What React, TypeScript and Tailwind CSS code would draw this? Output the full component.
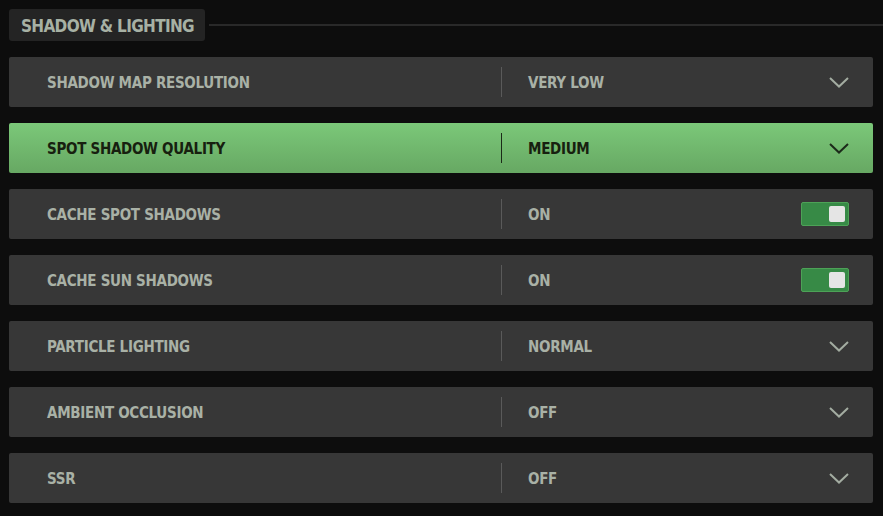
import React from "react";

type Row = { label: string; value: string; kind: "select" | "toggle"; active?: boolean };

const rows: Row[] = [
  { label: "SHADOW MAP RESOLUTION", value: "VERY LOW", kind: "select" },
  { label: "SPOT SHADOW QUALITY", value: "MEDIUM", kind: "select", active: true },
  { label: "CACHE SPOT SHADOWS", value: "ON", kind: "toggle" },
  { label: "CACHE SUN SHADOWS", value: "ON", kind: "toggle" },
  { label: "PARTICLE LIGHTING", value: "NORMAL", kind: "select" },
  { label: "AMBIENT OCCLUSION", value: "OFF", kind: "select" },
  { label: "SSR", value: "OFF", kind: "select" },
];

function Chevron({ dark }: { dark?: boolean }) {
  return (
    <svg width="20" height="11" viewBox="0 0 20 11" fill="none" className="shrink-0">
      <path
        d="M1 1 L10 9.5 L19 1"
        stroke={dark ? "#1c2a1a" : "#a3aca1"}
        strokeWidth="2"
        strokeLinejoin="miter"
      />
    </svg>
  );
}

function Toggle() {
  return (
    <div className="w-[48px] h-[24px] rounded-[2px] bg-[#378a46] border border-[#4da257] flex items-center justify-end pr-[3px]">
      <div className="w-[16px] h-[16px] rounded-[2px] bg-[#e5e5e5]" />
    </div>
  );
}

export default function App() {
  return (
    <div
      className="w-[883px] h-[516px] overflow-hidden bg-[#0d0d0d] pt-[9px] pl-[9px]"
      style={{ fontFamily: '"DejaVu Sans Condensed", "DejaVu Sans", sans-serif' }}
    >
      <div className="flex items-center">
        <div className="h-[32px] w-[196px] shrink-0 rounded-[3px] bg-[#242424] flex items-center pl-[12px] pt-[2px]">
          <span className="whitespace-nowrap text-[17px] font-bold text-[#a7b1a4] tracking-[-0.04em] leading-none">
            SHADOW &amp; LIGHTING
          </span>
        </div>
        <div className="flex-1 ml-[4px] mt-[-1px] h-[2px] bg-[#292929]" />
      </div>
      <div className="flex flex-col gap-[16px] mt-[16px] pr-[10px]">
        {rows.map((r) => (
          <div
            key={r.label}
            className={
              r.active
                ? "h-[50px] rounded-[2px] flex items-center bg-gradient-to-b from-[#7bc879] to-[#67a863]"
                : "h-[50px] rounded-[2px] flex items-center bg-[#373737]"
            }
          >
            <div className="w-[492px] pl-[38px] pt-[2px] flex items-center">
              <span
                className={
                  r.active
                    ? "whitespace-nowrap text-[15px] font-bold text-[#17200f] leading-none tracking-[-0.02em]"
                    : "whitespace-nowrap text-[15px] font-bold text-[#a9b1a6] leading-none tracking-[-0.02em]"
                }
              >
                {r.label}
              </span>
            </div>
            <div className={r.active ? "w-[1px] h-[30px] bg-[#1b2a18]" : "w-[1px] h-[30px] bg-[#5a5a5a]"} />
            <div className="flex-1 flex items-center pl-[26px] pr-[24px]">
              <span
                className={
                  r.active
                    ? "flex-1 pt-[2px] whitespace-nowrap text-[15px] font-bold text-[#17200f] leading-none tracking-[-0.02em]"
                    : "flex-1 pt-[2px] whitespace-nowrap text-[15px] font-bold text-[#a9b1a6] leading-none tracking-[-0.02em]"
                }
              >
                {r.value}
              </span>
              {r.kind === "select" ? <Chevron dark={r.active} /> : <Toggle />}
            </div>
          </div>
        ))}
      </div>
    </div>
  );
}
